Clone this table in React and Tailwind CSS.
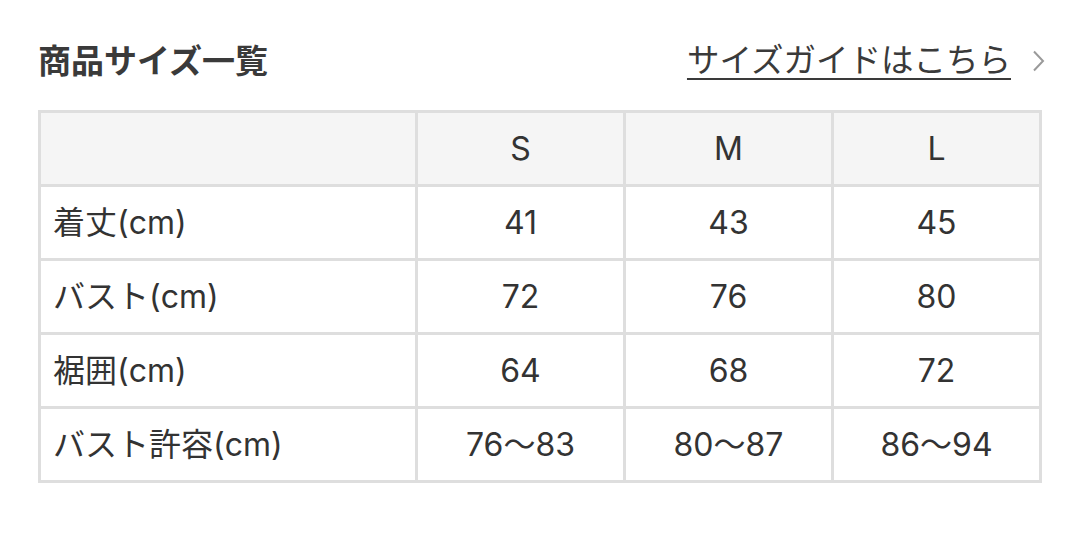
const rows = [
  { label: '着丈(cm)', values: ['41', '43', '45'] },
  { label: 'バスト(cm)', values: ['72', '76', '80'] },
  { label: '裾囲(cm)', values: ['64', '68', '72'] },
  { label: 'バスト許容(cm)', values: ['76〜83', '80〜87', '86〜94'] },
];

const sizes = ['S', 'M', 'L'];

export default function App() {
  return (
    <div
      className="w-[1080px] h-[541px] bg-white px-[38px] pt-[44px] text-[#333]"
      style={{ fontFamily: 'Inter, "Noto Sans CJK JP", sans-serif' }}
    >
      {/* Header */}
      <div className="flex items-center justify-between h-[34px]">
        <h2 className="text-[33px] leading-none font-bold text-[#3a3a3a]">商品サイズ一覧</h2>
        <a href="#" className="flex items-center gap-[21px] text-[32.5px] leading-none">
          <span className="underline decoration-2 underline-offset-[6px] text-[#3a3a3a]">
            サイズガイドはこちら
          </span>
          <svg width="13" height="22" viewBox="0 0 13 22" fill="none" className="mr-[-3px]">
            <path d="M2 1.5l9 9.5-9 9.5" stroke="#9a9a9a" strokeWidth="2" />
          </svg>
        </a>
      </div>

      {/* Size table */}
      <div className="mt-[32px] grid grid-cols-[374px_205px_205px_205px] gap-[3px] bg-[#dedede] p-[3px] w-[1004px]">
        <div className="h-[71px] bg-[#f5f5f5]" />
        {sizes.map((s) => (
          <div key={s} className="h-[71px] bg-[#f5f5f5] flex items-center justify-center text-[32px]">
            {s}
          </div>
        ))}
        {rows.map((row) => (
          <>
            <div key={row.label} className="h-[71px] bg-white flex items-center pl-[12px] text-[32px]">
              {row.label}
            </div>
            {row.values.map((v, i) => (
              <div
                key={row.label + i}
                className="h-[71px] bg-white flex items-center justify-center text-[32px]"
              >
                {v}
              </div>
            ))}
          </>
        ))}
      </div>
    </div>
  );
}
